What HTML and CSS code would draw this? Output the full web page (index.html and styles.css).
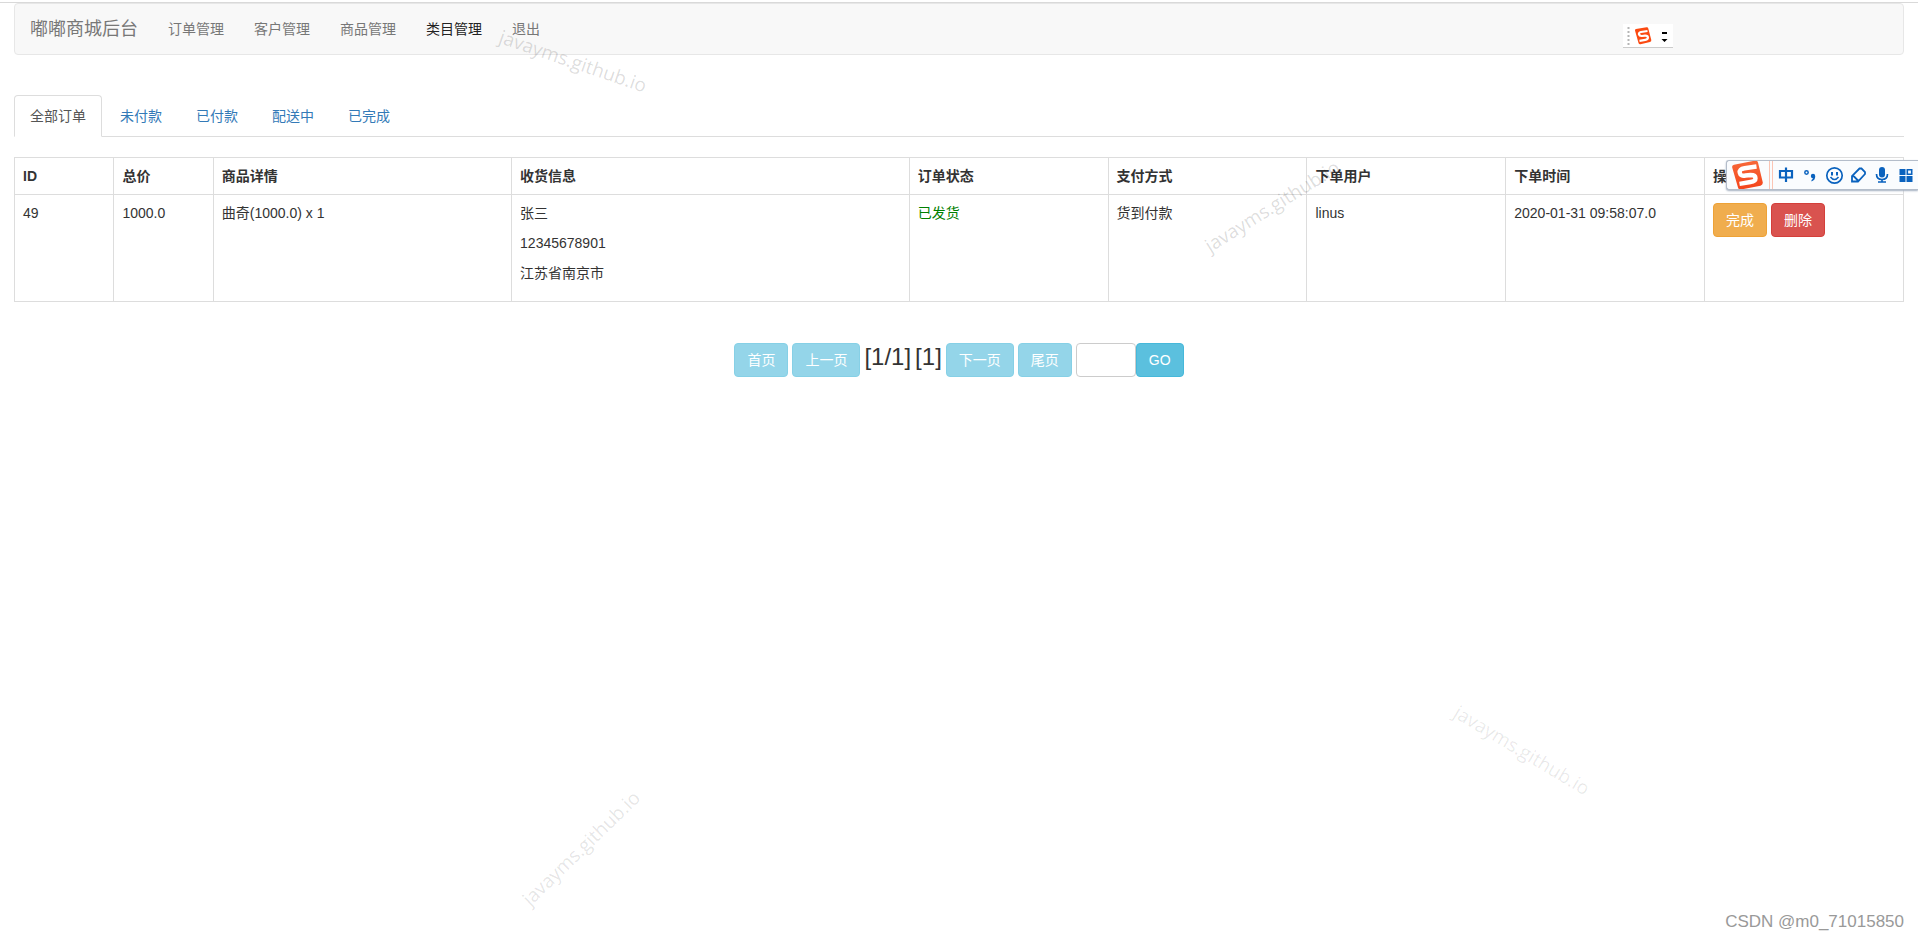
FILE: index.html
```html
<!DOCTYPE html>
<html lang="zh-CN">
<head>
<meta charset="utf-8">
<title>嘟嘟商城后台</title>
<link rel="stylesheet" href="styles.css">
</head>
<body>
<div class="page">
  <nav class="navbar">
    <a class="brand" href="#">嘟嘟商城后台</a>
    <ul class="nav-list">
      <li><a class="nav-link" href="#">订单管理</a></li>
      <li><a class="nav-link" href="#">客户管理</a></li>
      <li><a class="nav-link" href="#">商品管理</a></li>
      <li><a class="nav-link nav-link-active" href="#">类目管理</a></li>
      <li><a class="nav-link" href="#">退出</a></li>
    </ul>
  </nav>

  <ul class="tabs">
    <li><a class="tab tab-active" href="#">全部订单</a></li>
    <li><a class="tab" href="#">未付款</a></li>
    <li><a class="tab" href="#">已付款</a></li>
    <li><a class="tab" href="#">配送中</a></li>
    <li><a class="tab" href="#">已完成</a></li>
  </ul>

  <table class="orders">
    <colgroup>
      <col class="col-s"><col class="col-s"><col class="col-l"><col class="col-xl">
      <col class="col-m"><col class="col-m"><col class="col-m"><col class="col-m"><col class="col-m">
    </colgroup>
    <thead>
      <tr><th>ID</th><th>总价</th><th>商品详情</th><th>收货信息</th><th>订单状态</th><th>支付方式</th><th>下单用户</th><th>下单时间</th><th>操作</th></tr>
    </thead>
    <tbody>
      <tr>
        <td>49</td>
        <td>1000.0</td>
        <td>曲奇(1000.0) x 1</td>
        <td><p>张三</p><p>12345678901</p><p>江苏省南京市</p></td>
        <td><span class="shipped">已发货</span></td>
        <td>货到付款</td>
        <td>linus</td>
        <td>2020-01-31 09:58:07.0</td>
        <td><div class="actions"><button class="btn btn-warning" type="button">完成</button><button class="btn btn-danger" type="button">删除</button></div></td>
      </tr>
    </tbody>
  </table>

  <form class="pager">
    <button class="btn btn-info" type="button" disabled>首页</button>
    <button class="btn btn-info" type="button" disabled>上一页</button>
    <span class="pager-text">[1/1]</span>
    <span class="pager-text">[1]</span>
    <button class="btn btn-info" type="button" disabled>下一页</button>
    <button class="btn btn-info" type="button" disabled>尾页</button>
    <span class="jump"><input class="page-input" type="text" aria-label="页码"><button class="btn btn-info" type="button">GO</button></span>
  </form>
</div>

<div class="mini-bar">
  <svg width="50" height="23" viewBox="0 0 50 23" aria-hidden="true">
    <path d="M5.500 3v20" stroke="#b5b5b5" stroke-width="2" stroke-dasharray="2 2"/>
    <path d="M12 6.500Q11.800 5.200 13 5L23.500 3.200Q25 3 25.300 4.500L28.300 16Q28.600 17.500 27 18L17.500 20.200Q16 20.500 15.500 19Z" fill="#fb4a12"/>
    <path d="M24.500 7L18 8Q15.500 8.600 16 10.400T19 12L22 11.700Q24.800 11.600 24.900 13.500T22.300 15.800L16.500 16.800" fill="none" stroke="#fff" stroke-width="2.200"/>
    <path d="M39 8h5v2h-5zM38.500 15h6l-3 3z" fill="#000"/>
  </svg>
</div>

<div class="ime-bar">
  <svg width="191" height="28" viewBox="0 0 191 28" aria-hidden="true">
    <defs><linearGradient id="s" x2="0" y2="1"><stop offset="0" stop-color="#f7693a"/><stop offset="1" stop-color="#f4441b"/></linearGradient></defs>
    <path d="M5.200 6.500Q4.800 4.300 7 3.800L28.500 -.5Q30.300 -.7 31 1.500L35.800 21.500Q36 24 33.500 24.700L14 28.500Q11.500 28.800 11 26.500Z" fill="url(#s)"/>
    <path d="M29.500 5.500L17.500 7.200Q12 8 12.800 11.800T18.500 14.500L23.500 14Q28.500 14 28.500 17.200T23.500 21L12.500 22.800" fill="none" stroke="#fff" stroke-width="4.400"/>
    <path d="M42.500 0v28M45.500 0v28" stroke="#fbc5b5"/>
    <g fill="none" stroke="#0a62be">
      <path d="M53 10h12v6.500H53zM59 6.500V21" stroke-width="2.200"/>
      <circle cx="79.500" cy="11.500" r="1.700" stroke-width="1.500"/>
      <circle cx="107.500" cy="14.500" r="7.700" stroke-width="1.700"/>
      <path d="M103.500 16q4 5 8 0" stroke-width="1.600"/>
      <path d="M125 20.500v-5.500l7.500-7.500h2l3.500 3.500v2l-7 7.500zM126 14.500l5.500 5.500" stroke-width="1.800"/>
      <path d="M149.500 13q0 5.500 5.500 5.500t5.500-5.500M155 18v3M151 21h8" stroke-width="1.700"/>
      <path d="M180.300 8.800h4.400v4.400h-4.400z" stroke-width="1.600"/>
    </g>
    <g fill="#0a62be">
      <circle cx="86" cy="15" r="2.200"/><path d="M88.200 15q.3 4-3.700 5.500v-1.500q1.500-.8 1.500-2.500z"/>
      <rect x="104" y="11" width="2" height="3.500"/><rect x="109" y="11" width="2" height="3.500"/>
      <rect x="152" y="6" width="6" height="10.500" rx="3"/>
      <path d="M172.500 8h6v6h-6zM172.500 15h6v6h-6zM179.500 15h6v6h-6z"/>
    </g>
  </svg>
</div>

<span class="watermark wm-nav">javayms.github.io</span>
<span class="watermark wm-table">javayms.github.io</span>
<span class="watermark wm-left">javayms.github.io</span>
<span class="watermark wm-right">javayms.github.io</span>
<span class="credit">CSDN @m0_71015850</span>
</body>
</html>
```
FILE: styles.css
```css
* { box-sizing: border-box; }
body {
  position: relative;
  min-height: 100vh;
  margin: 0;
  padding-top: 2px;
  overflow-x: hidden;
  color: #333;
  background: #fff;
  font: 14px/20px "Liberation Sans", "Noto Sans CJK SC", sans-serif;
}
a { text-decoration: none; }
ul { margin: 0; padding: 0; list-style: none; }
.page { padding: 0 14px; border-top: 1px solid #d9d9d9; }

.navbar {
  display: flex;
  min-height: 52px;
  border: 1px solid #e7e7e7;
  border-radius: 4px;
  background: #f8f8f8;
}
.brand { padding: 15px; font-size: 18px; color: #777; }
.nav-list { display: flex; }
.nav-link { display: block; padding: 15px; color: #777; }
.nav-link-active { color: #222; }

.tabs { display: flex; gap: 2px; margin-top: 40px; border-bottom: 1px solid #ddd; }
.tab {
  display: block;
  margin-bottom: -1px;
  padding: 10px 15px;
  border: 1px solid transparent;
  border-radius: 4px 4px 0 0;
  color: #337ab7;
}
.tab-active { color: #555; background: #fff; border-color: #ddd #ddd #fff; }

.orders { width: 100%; margin-top: 20px; border-collapse: collapse; table-layout: fixed; }
.orders th, .orders td {
  padding: 8px;
  border: 1px solid #ddd;
  text-align: left;
  vertical-align: top;
}
.orders p { margin: 0 0 10px; }
.col-s { width: 5%; }
.col-m { width: 10%; }
.col-l { width: 15%; }
.col-xl { width: 20%; }
.shipped { color: green; }
.actions { display: flex; gap: 4px; }

.btn {
  padding: 6px 12px;
  border: 1px solid;
  border-radius: 4px;
  color: #fff;
  font: inherit;
}
.btn-warning { background: #f0ad4e; border-color: #eea236; }
.btn-danger { background: #d9534f; border-color: #d43f3a; }
.btn-info { background: #5bc0de; border-color: #46b8da; }
.btn:disabled { opacity: .65; }

.pager { display: flex; justify-content: center; align-items: baseline; gap: 4px; margin-top: 41px; }
.pager-text { font-size: 24px; line-height: 26px; }
.jump { display: flex; align-items: center; }
.page-input {
  width: 60px;
  height: 34px;
  padding: 6px 12px;
  border: 1px solid #ccc;
  border-radius: 4px;
  font: inherit;
}

.mini-bar {
  position: absolute;
  top: 24px;
  right: 245px;
  background: #fff;
  border-bottom: 1px solid #ccc;
}
.ime-bar {
  position: absolute;
  top: 160px;
  right: 0;
  border: 1px solid #b4bdca;
  border-right: 0;
  border-radius: 3px 0 0 3px;
  background: #fafcfe;
  box-shadow: 0 1px 2px #a3afc0;
}
.mini-bar svg, .ime-bar svg { display: block; }

.watermark {
  position: absolute;
  color: rgba(0, 0, 0, .14);
  font: 19px/24px "Open Sans", "Noto Sans", sans-serif;
  white-space: nowrap;
  pointer-events: none;
}
.wm-nav { left: 573px; top: 61px; transform: translate(-50%, -50%) rotate(19deg); }
.wm-table { left: 1272px; top: 206px; transform: translate(-50%, -50%) rotate(-32deg); }
.wm-left { left: 581px; top: 848px; transform: translate(-50%, -50%) rotate(-44deg); color: rgba(0, 0, 0, .11); }
.wm-right { left: 1522px; top: 750px; transform: translate(-50%, -50%) rotate(31deg); color: rgba(0, 0, 0, .09); }
.credit { position: absolute; right: 14px; bottom: 6px; color: #999; font-size: 17px; }
```
